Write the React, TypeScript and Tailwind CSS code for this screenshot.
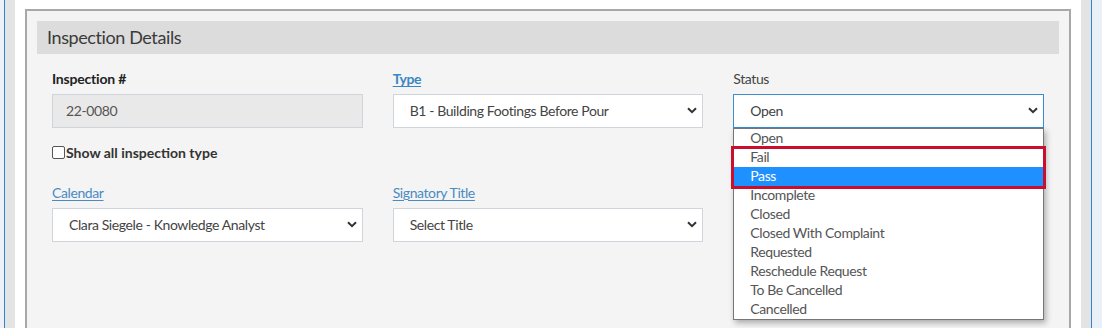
import React from "react";

const font = { fontFamily: "Lato, 'Liberation Sans', sans-serif" };

function Chevron() {
  return (
    <svg width="10" height="7" viewBox="0 0 10 7" className="shrink-0">
      <path d="M1 1.2 L5 5.2 L9 1.2" fill="none" stroke="#333" strokeWidth="2" />
    </svg>
  );
}

function SelectBox({ value, focused }: { value: string; focused?: boolean }) {
  return (
    <div
      className={`h-[34px] bg-white border flex items-center justify-between pl-[16px] pr-[5px] pb-[1px] text-[14px] text-[#444] ${
        focused ? "border-[#3b8ed0]" : "border-[#d0d5db]"
      }`}
    >
      <span>{value}</span>
      <Chevron />
    </div>
  );
}

const options = [
  "Open",
  "Fail",
  "Pass",
  "Incomplete",
  "Closed",
  "Closed With Complaint",
  "Requested",
  "Reschedule Request",
  "To Be Cancelled",
  "Cancelled",
];

export default function App() {
  return (
    <div className="w-[1102px] h-[328px] overflow-hidden flex bg-white tracking-[-0.4px]" style={font}>
      {/* left chrome */}
      <div className="w-[4px] bg-[#eef2f8]" />
      <div className="w-[1px] bg-[#2f86d0]" />
      <div className="w-[10px] bg-[#e4e4e4]" />
      <div className="w-[10px] bg-white" />

      {/* main panel */}
      <div className="w-[1046px] pt-[9px]">
        <div className="h-[340px] border-2 border-b-0 border-[#a8a8a8] bg-[#f4f4f4] px-[10px] pt-[10px]">
          <div className="h-[33px] bg-[#dcdcdc] flex items-center pl-[10px] text-[18px] text-[#3a3a3a]">
            Inspection Details
          </div>

          <div className="px-[15px] pt-[15px] grid grid-cols-3 gap-x-[30px]">
            {/* row 1 */}
            <div>
              <div className="h-[20px] leading-[19px] mb-[5px] text-[14px] font-bold text-[#222] tracking-[-0.2px]">
                Inspection #
              </div>
              <div className="h-[34px] bg-[#e9e9e9] border border-[#cfd4da] flex items-center pl-[13px] pb-[1px] text-[14px] text-[#555]">
                22-0080
              </div>
            </div>
            <div>
              <div className="h-[20px] leading-[19px] mb-[5px] text-[14px] font-bold text-[#3a87c3] underline underline-offset-2">
                Type
              </div>
              <SelectBox value="B1 - Building Footings Before Pour" />
            </div>
            <div className="relative">
              <div className="h-[20px] leading-[19px] mb-[5px] text-[14px] text-[#444]">Status</div>
              <SelectBox value="Open" focused />
              {/* open dropdown list */}
              <div className="absolute left-0 right-0 top-[59px] z-10 bg-white border border-[#767676] shadow-[2px_3px_6px_rgba(0,0,0,0.3)] text-[14px] text-[#555]">
                <div className="h-[19px] leading-[18px] pl-[16px]">{options[0]}</div>
                <div className="relative">
                  <div className="h-[19px] leading-[18px] pl-[16px]">{options[1]}</div>
                  <div className="h-[19px] leading-[18px] pl-[16px] bg-[#1e90ff] text-white">{options[2]}</div>
                  <div className="absolute -left-[3px] -right-[3px] -top-[2px] -bottom-[3px] border-[3px] border-[#c8102e] pointer-events-none" />
                </div>
                {options.slice(3).map((o) => (
                  <div key={o} className="h-[19px] leading-[18px] pl-[16px]">
                    {o}
                  </div>
                ))}
              </div>
            </div>

            {/* row 2 */}
            <div className="col-span-3 h-[20px] mt-[14px] flex items-center gap-[1px] text-[14px] font-bold text-[#333] tracking-normal">
              <span className="w-[13px] h-[13px] border border-[#555] rounded-[2px] bg-white" />
              <span>Show all inspection type</span>
            </div>

            {/* row 3 */}
            <div className="mt-[21px]">
              <div className="h-[20px] leading-[19px] mb-[5px] text-[14px] text-[#4a8bc2] underline underline-offset-2">
                Calendar
              </div>
              <SelectBox value="Clara Siegele - Knowledge Analyst" />
            </div>
            <div className="mt-[21px]">
              <div className="h-[20px] leading-[19px] mb-[5px] text-[14px] text-[#4a8bc2] underline underline-offset-2">
                Signatory Title
              </div>
              <SelectBox value="Select Title" />
            </div>
            <div />
          </div>
        </div>
      </div>

      {/* right chrome */}
      <div className="w-[10px] bg-white" />
      <div className="w-[10px] bg-[#e4e4e4]" />
      <div className="w-[1px] bg-[#2f86d0]" />
      <div className="flex-1 bg-[#eaf0f7]" />
    </div>
  );
}
